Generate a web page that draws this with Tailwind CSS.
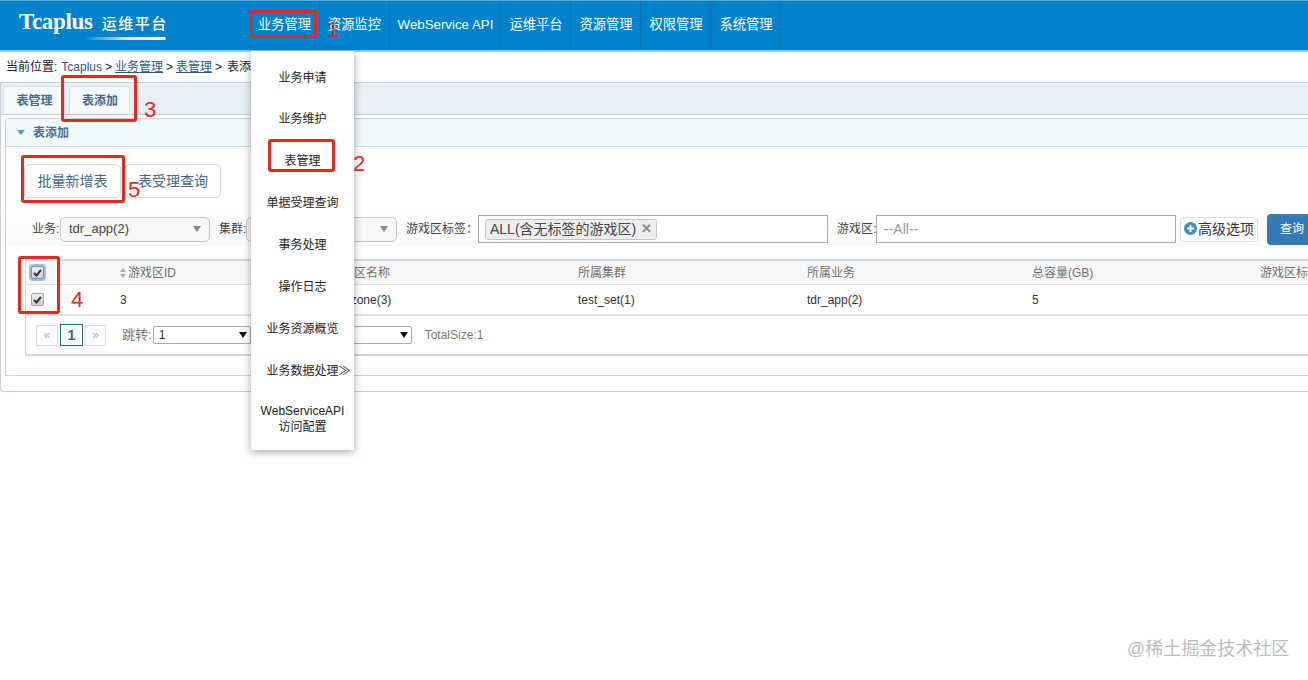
<!DOCTYPE html>
<html lang="en">
<head>
<meta charset="UTF-8">
<title>Tcaplus</title>
<script src="https://cdn.jsdelivr.net/npm/@tailwindcss/browser@4"></script>
</head>
<body class="relative w-[1308px] h-[680px] overflow-hidden bg-white text-[13px] text-[#333] font-['Liberation_Sans','Noto_Sans_CJK_SC',sans-serif]">

<!-- header -->
<header class="h-[52px] flex bg-[#0082cc] border-t border-t-[#5aa9d8] border-b-2 border-b-[#7fd0f2] text-white">
  <div class="w-[249px] pl-[19px] pt-[7px] relative">
    <div class="flex items-baseline gap-[9px]">
      <span class="font-['Liberation_Serif',serif] font-bold text-[23px] leading-[28px] tracking-[-0.3px]">Tcaplus</span>
      <span class="font-medium text-[15px] tracking-[1.5px]">运维平台</span>
    </div>
    <div class="absolute left-[84px] top-[36px] w-[82px] h-[3px] rounded-full bg-linear-to-r from-white/0 via-white/80 to-white"></div>
  </div>
  <nav class="flex h-[47px] text-[13.3px] border-l border-[#0a74b4]">
    <a class="w-[70px] flex items-center justify-center border-r border-[#0a74b4]">业务管理</a>
    <a class="w-[70px] flex items-center justify-center border-r border-[#0a74b4]">资源监控</a>
    <a class="w-[111px] pl-[1px] flex items-center justify-center border-r border-[#0a74b4]">WebService API</a>
    <a class="w-[70px] pl-[1px] flex items-center justify-center border-r border-[#0a74b4]">运维平台</a>
    <a class="w-[70px] pl-[1px] flex items-center justify-center border-r border-[#0a74b4]">资源管理</a>
    <a class="w-[70px] pl-[1px] flex items-center justify-center border-r border-[#0a74b4]">权限管理</a>
    <a class="w-[70px] pl-[1px] flex items-center justify-center border-r border-[#0a74b4]">系统管理</a>
  </nav>
</header>

<!-- breadcrumb -->
<div class="h-[30px] pl-[6px] flex items-center text-[12px] text-[#222] gap-[3px]">
  <span class="mr-[1px]">当前位置:</span><a class="text-[#2a5a82]">Tcaplus</a><span>&gt;</span><a class="text-[#2a5a82] underline">业务管理</a><span>&gt;</span><a class="text-[#2a5a82] underline">表管理</a><span>&gt;</span><span class="ml-[2px]">表添加</span>
</div>

<!-- outer panel -->
<section class="h-[310px] border border-[#c5d0dc] border-r-0 rounded-bl-[4px]">
  <div class="h-[32px] pl-[2px] pt-[4px] flex gap-[4px] items-end bg-linear-to-b from-[#e8eff5] to-[#e6f2f7] border-b border-[#c5d0dc]">
    <a class="w-[62px] h-[28px] pl-[1px] flex items-center justify-center text-[12px] font-bold text-[#3f6b8c] bg-[#f4f9fc] border border-b-0 border-[#d5dee6] rounded-t-[4px]">表管理</a>
    <a class="w-[61px] h-[28px] pl-[1px] flex items-center justify-center text-[12px] font-bold text-[#3f6b8c] bg-[#f4f9fc] border border-b-0 border-[#d5dee6] rounded-t-[4px]">表添加</a>
  </div>

  <div class="mt-[3px] ml-[4px] h-[258px] border border-[#c4d6e2] border-r-0 rounded-tl-[4px]">
    <div class="h-[28px] pl-[11px] flex items-center gap-[8px] bg-[#f1f8fc] border-b border-[#cfe0ea] text-[12px] font-bold text-[#4a6f8a]">
      <svg width="8" height="5" viewBox="0 0 8 5"><path d="M0 0h8L4 5z" fill="#4d9fc4"/></svg>
      <span>表添加</span>
    </div>

    <div class="pl-[18px] pt-[17px] flex text-[14px] text-[#3f6b8c] gap-[4px]">
      <a class="w-[97px] h-[34px] flex items-center justify-center border border-[#d8d8d8] rounded-[5px]">批量新增表</a>
      <a class="w-[96px] h-[34px] flex items-center justify-center border border-[#d8d8d8] rounded-[5px]">表受理查询</a>
    </div>

    <div class="mt-[14px] pl-[26px] h-[34px] flex items-center text-[12px] text-[#444] whitespace-nowrap bg-linear-to-b from-white to-[#fafafa]">
      <span class="w-[28px] shrink-0">业务:</span>
      <div class="w-[150px] h-[25px] shrink-0 px-[8px] flex items-center justify-between border border-[#c4c4c4] rounded-[5px] bg-[#f7f7f7] text-[13px]">
        <span>tdr_app(2)</span><span class="w-0 h-0 border-x-[4px] border-x-transparent border-t-[6px] border-t-[#888]"></span>
      </div>
      <span class="w-[27px] ml-[9px] shrink-0">集群:</span>
      <div class="w-[151px] h-[25px] shrink-0 px-[8px] flex items-center justify-between border border-[#c4c4c4] rounded-[5px] bg-[#f7f7f7] text-[13px]">
        <span>test_set(1)</span><span class="w-0 h-0 border-x-[4px] border-x-transparent border-t-[6px] border-t-[#888]"></span>
      </div>
      <span class="w-[72px] ml-[9px] shrink-0">游戏区标签：</span>
      <div class="w-[350px] h-[28px] shrink-0 pl-[6px] flex items-center border border-[#a9a9a9] bg-white">
        <span class="h-[21px] px-[4px] flex items-center gap-[5px] border border-[#c4c4c4] rounded-[3px] bg-[#eee] text-[14px]">ALL(含无标签的游戏区)<b class="text-[#888] text-[13px]">✕</b></span>
      </div>
      <span class="w-[39px] ml-[9px] shrink-0">游戏区:</span>
      <div class="w-[300px] h-[28px] shrink-0 pl-[7px] flex items-center border border-[#a9a9a9] bg-white text-[14px] text-[#999]">--All--</div>
      <a class="w-[78px] h-[25px] ml-[4px] shrink-0 flex items-center justify-center gap-[1px] border border-[#ddd] rounded-[4px] bg-white text-[14px] text-[#333]">
        <svg width="13" height="13" viewBox="0 0 13 13" class="shrink-0 -mt-[2px]"><circle cx="6.5" cy="6.5" r="6.5" fill="#3a8fc8"/><path d="M6.5 3v7M3 6.5h7" stroke="#fff" stroke-width="2"/></svg>
        <span>高级选项</span>
      </a>
      <a class="w-[60px] h-[31px] ml-[9px] shrink-0 pr-[10px] flex items-center justify-center rounded-[4px] bg-[#337ab7] text-white text-[12px]">查询</a>
    </div>

    <div class="mt-[13px] ml-[19px] w-[1300px] border-t-2 border-[#c5d9e8] border-l border-l-[#c5d9e8] text-[12px]">
      <div class="h-[24px] grid grid-cols-[94px_210px_248px_229px_225px_228px_60px] items-center bg-[#f7f7f7] text-[#707070] border-b border-[#ddd]">
        <span class="pl-[5px] flex">
          <span class="w-[13px] h-[13px] flex items-center justify-center rounded-[2px] border border-[#8a8a8a] bg-linear-to-b from-[#f0f0f0] to-[#cfcfcf] shadow-[0_0_0_2px_#9dbce6]">
            <svg width="9" height="8" viewBox="0 0 9 8"><path d="M1 4l2.5 2.5L8 1" fill="none" stroke="#333" stroke-width="2"/></svg>
          </span>
        </span>
        <span class="flex items-center gap-[2px]"><svg width="6" height="10" viewBox="0 0 6 10"><path d="M3 0l3 4H0zM3 10L0 6h6z" fill="#aaa"/></svg>游戏区ID</span>
        <span>游戏区名称</span><span>所属集群</span><span>所属业务</span><span>总容量(GB)</span><span class="whitespace-nowrap">游戏区标签</span>
      </div>
      <div class="h-[31px] grid grid-cols-[94px_210px_248px_229px_225px_228px_60px] items-center text-[#333] border-b-2 border-[#e2e2e2]">
        <span class="pl-[5px] flex">
          <span class="w-[13px] h-[13px] flex items-center justify-center rounded-[2px] border border-[#a0a0a0] bg-linear-to-b from-[#f0f0f0] to-[#cfcfcf]">
            <svg width="9" height="8" viewBox="0 0 9 8"><path d="M1 4l2.5 2.5L8 1" fill="none" stroke="#333" stroke-width="2"/></svg>
          </span>
        </span>
        <span>3</span><span>tdr_zone(3)</span><span>test_set(1)</span><span>tdr_app(2)</span><span>5</span><span></span>
      </div>
      <div class="h-[38px] pl-[10px] flex items-center text-[12px] text-[#777]">
        <a class="w-[22px] h-[21px] flex items-center justify-center border border-[#ddd] text-[#aaa]">«</a>
        <a class="w-[23px] h-[22px] ml-[2px] flex items-center justify-center border border-[#1f6a8c] text-[#2f6c8c] font-bold text-[14px]">1</a>
        <a class="w-[21px] h-[21px] ml-[2px] flex items-center justify-center border border-[#ddd] text-[#aaa]">»</a>
        <span class="ml-[16px] text-[13px]">跳转:</span>
        <div class="w-[98px] h-[18px] ml-[1px] pl-[5px] pr-[3px] flex items-center justify-between border border-[#aaa] rounded-[2px] text-[#333]">1<span class="w-0 h-0 border-x-[4px] border-x-transparent border-t-[6px] border-t-[#111]"></span></div>
        <div class="w-[161px] h-[18px] pr-[3px] flex items-center justify-end border border-[#aaa] rounded-[2px]"><span class="w-0 h-0 border-x-[4px] border-x-transparent border-t-[6px] border-t-[#111]"></span></div>
        <span class="ml-[13px]">TotalSize:1</span>
      </div>
      <div class="border-t-2 border-[#c5d9e8]"></div>
    </div>
  </div>
</section>

<!-- dropdown menu -->
<ul class="absolute left-[251px] top-[51px] w-[103px] h-[399px] pt-[5px] bg-white shadow-[0_2px_8px_rgba(0,0,0,0.35)] text-[12px] text-[#222] text-center">
  <li class="h-[42px] pt-[2px] flex items-center justify-center">业务申请</li>
  <li class="h-[42px] flex items-center justify-center">业务维护</li>
  <li class="h-[42px] flex items-center justify-center">表管理</li>
  <li class="h-[42px] flex items-center justify-center">单据受理查询</li>
  <li class="h-[42px] flex items-center justify-center">事务处理</li>
  <li class="h-[42px] flex items-center justify-center">操作日志</li>
  <li class="h-[42px] flex items-center justify-center">业务资源概览</li>
  <li class="h-[42px] pl-[12px] flex items-center justify-center whitespace-nowrap">业务数据处理≫</li>
  <li class="pt-[11px] leading-[16px]">WebServiceAPI<br>访问配置</li>
</ul>

<!-- red annotations drawn on the screenshot -->
<div class="absolute left-[249px] top-[10px] w-[68px] h-[28px] border-[3px] border-[#e8281e] rounded-[3px]"></div>
<div class="absolute left-[61px] top-[75px] w-[76px] h-[47px] border-[3px] border-[#e8281e] rounded-[3px]"></div>
<div class="absolute left-[268px] top-[139px] w-[67px] h-[33px] border-[3px] border-[#e8281e] rounded-[3px]"></div>
<div class="absolute left-[21px] top-[155px] w-[104px] h-[48px] border-[3px] border-[#e8281e] rounded-[3px]"></div>
<div class="absolute left-[18px] top-[256px] w-[42px] h-[58px] border-[3px] border-[#e8281e] rounded-[3px]"></div>
<span class="absolute left-[327px] top-[18px] text-[22px] leading-[24px] text-[#e8281e]">1</span>
<span class="absolute left-[353px] top-[152px] text-[22px] leading-[24px] text-[#e8281e]">2</span>
<span class="absolute left-[144px] top-[98px] text-[22px] leading-[24px] text-[#e8281e]">3</span>
<span class="absolute left-[71px] top-[288px] text-[22px] leading-[24px] text-[#e8281e]">4</span>
<span class="absolute left-[128px] top-[178px] text-[22px] leading-[24px] text-[#e8281e]">5</span>

<!-- watermark -->
<span class="absolute left-[1127px] top-[638px] text-[18px] leading-[22px] text-[#bdbdbd]">@稀土掘金技术社区</span>
</body>
</html>
